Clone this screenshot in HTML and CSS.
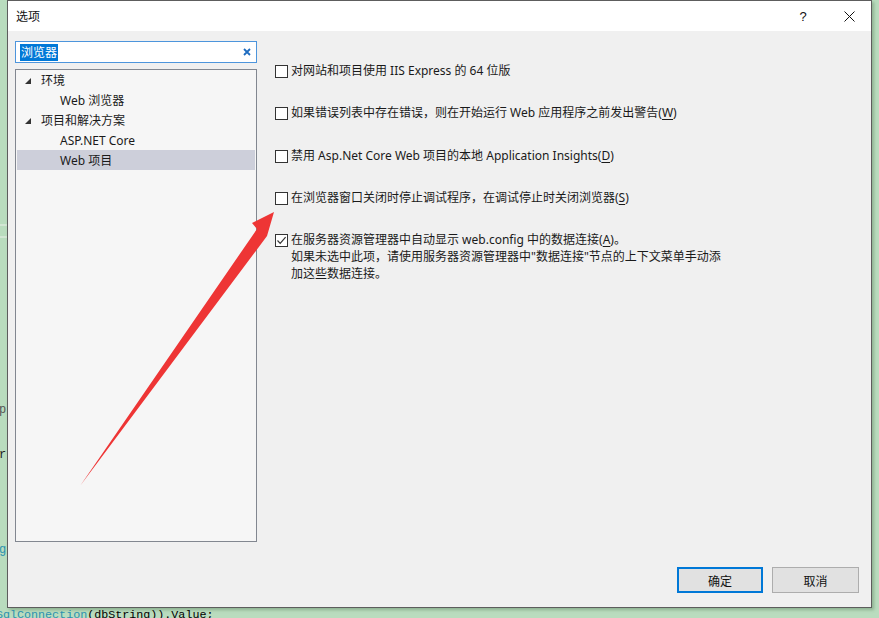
FILE: index.html
```html
<!DOCTYPE html>
<html lang="zh-CN">
<head>
<meta charset="utf-8">
<title>选项</title>
<link rel="stylesheet" href="styles.css">
</head>
<body>
<div class="screen">
  <div class="top-row">
    <div class="editor-left">
      <div class="hl-band"></div>
      <div class="frag frag-p">p</div>
      <div class="frag frag-r">r</div>
      <div class="frag frag-g">g</div>
    </div>
    <div class="dialog">
      <div class="titlebar">
        <span class="title">选项</span>
        <span class="spacer"></span>
        <span class="tb-btn help">?</span>
        <span class="tb-btn close">
          <svg width="11" height="11" viewBox="0 0 11 11"><path d="M0.5 0.5 L10.5 10.5 M10.5 0.5 L0.5 10.5" stroke="#111" stroke-width="1" fill="none"/></svg>
        </span>
      </div>
      <div class="content">
        <div class="left-col">
          <div class="search">
            <span class="search-text">浏览器</span>
            <span class="search-clear">
              <svg width="8" height="8" viewBox="0 0 8 8"><path d="M1 1 L7 7 M7 1 L1 7" stroke="#1e6cc0" stroke-width="1.8" fill="none"/></svg>
            </span>
          </div>
          <div class="tree">
            <div class="node parent"><span class="tri"></span><span>环境</span></div>
            <div class="node child">Web 浏览器</div>
            <div class="node parent"><span class="tri"></span><span>项目和解决方案</span></div>
            <div class="node child">ASP.NET Core</div>
            <div class="node child selected">Web 项目</div>
          </div>
        </div>
        <div class="right-col">
          <div class="opt"><span class="box"></span><span class="label">对网站和项目使用 IIS Express 的 64 位版</span></div>
          <div class="opt"><span class="box"></span><span class="label">如果错误列表中存在错误，则在开始运行 Web 应用程序之前发出警告(<u>W</u>)</span></div>
          <div class="opt"><span class="box"></span><span class="label">禁用 Asp.Net Core Web 项目的本地 Application Insights(<u>D</u>)</span></div>
          <div class="opt"><span class="box"></span><span class="label">在浏览器窗口关闭时停止调试程序，在调试停止时关闭浏览器(<u>S</u>)</span></div>
          <div class="opt"><span class="box checked"><svg width="11" height="11" viewBox="0 0 11 11"><path d="M1.5 5.5 L4.2 8.3 L9.6 2.2" stroke="#333" stroke-width="1.2" fill="none"/></svg></span><span class="label">在服务器资源管理器中自动显示 web.config 中的数据连接(<u>A</u>)。<br>如果未选中此项，请使用服务器资源管理器中"数据连接"节点的上下文菜单手动添<br>加这些数据连接。</span></div>
        </div>
        <div class="footer">
          <button class="btn primary">确定</button>
          <button class="btn">取消</button>
        </div>
      </div>
    </div>
  </div>
  <div class="code-line"><span class="type">SqlConnection</span>(dbString)).Value;</div>
</div>
<svg class="arrow" width="879" height="618" viewBox="0 0 879 618">
  <polygon points="80,486 257,229 252,223 274,212 267,236" fill="#ee3535"/>
</svg>
</body>
</html>
```
FILE: styles.css
```css
* { box-sizing: border-box; }
html, body {
  margin: 0;
  padding: 0;
  width: 879px;
  height: 618px;
  overflow: hidden;
  background: #b9dcbe;
  font-family: "Noto Sans", "Noto Sans CJK SC", sans-serif;
  font-size: 12px;
  color: #1a1a1a;
}
.screen {
  display: flex;
  flex-direction: column;
  width: 879px;
  height: 618px;
}
.top-row {
  display: flex;
  height: 608px;
}
.editor-left {
  width: 7px;
  flex: none;
  overflow: hidden;
  font-family: "Liberation Mono", monospace;
  font-size: 12px;
  line-height: 14px;
  display: flex;
  flex-direction: column;
}
.hl-band {
  margin-top: 224px;
  height: 14px;
  border-top: 2px solid #d2e6d4;
  border-bottom: 2px solid #d2e6d4;
}
.frag { margin-left: -1px; height: 14px; }
.frag-p { margin-top: 165px; color: #555; }
.frag-r { margin-top: 31px; color: #222; }
.frag-g { margin-top: 81px; color: #2b91af; }
.dialog {
  width: 865px;
  height: 608px;
  border: 1px solid #5d5d5d;
  background: #f0f0f0;
  display: flex;
  flex-direction: column;
  box-shadow: 2px 2px 3px rgba(60, 100, 60, 0.35);
}
.titlebar {
  height: 30px;
  background: #ffffff;
  display: flex;
  align-items: center;
  padding: 0 7px 0 8px;
  flex: none;
}
.title { font-size: 12px; color: #111; }
.spacer { flex: 1; }
.tb-btn {
  width: 30px;
  height: 30px;
  display: flex;
  align-items: center;
  justify-content: center;
  font-family: "Liberation Sans", sans-serif;
  font-size: 13px;
  color: #111;
}
.help { margin-right: 16px; }
.content {
  flex: 1;
  display: grid;
  grid-template-columns: 242px 1fr;
  grid-template-rows: 1fr auto;
  column-gap: 18px;
  row-gap: 24px;
  padding: 10px 12px 14px 7px;
}
.left-col {
  display: flex;
  flex-direction: column;
  gap: 6px;
}
.search {
  height: 22px;
  border: 1px solid #4d95dc;
  background: #fff;
  display: flex;
  align-items: center;
  padding: 0 5px 0 4px;
}
.search-text {
  background: #0078d7;
  color: #fff;
  line-height: 17px;
  padding: 0 1px;
}
.search-clear { margin-left: auto; display: flex; }
.tree {
  height: 473px;
  border: 1px solid #828790;
  background: #f6f6f6;
  padding: 0 1px;
}
.node {
  height: 20px;
  line-height: 20px;
  display: flex;
  align-items: center;
  padding-top: 1px;
  color: #1a1a1a;
}
.parent { padding-left: 8px; }
.child { padding-left: 43px; }
.selected { background: #cdcfda; }
.tri {
  width: 0;
  height: 0;
  border-left: 6px solid transparent;
  border-bottom: 6px solid #333;
  margin-right: 10px;
}
.right-col {
  padding-top: 21px;
  display: flex;
  flex-direction: column;
  gap: 25.3px;
}
.opt {
  display: flex;
  align-items: flex-start;
  line-height: 17px;
}
.box {
  width: 13px;
  height: 13px;
  flex: none;
  border: 1px solid #333;
  background: #fff;
  margin-top: 3px;
  margin-right: 3px;
  display: flex;
  align-items: center;
  justify-content: center;
}
.label { color: #1a1a1a; }
.label u { text-underline-offset: 2px; }
.footer {
  grid-column: 1 / -1;
  display: flex;
  justify-content: flex-end;
  gap: 9px;
}
.btn {
  height: 26px;
  width: 87px;
  border: 1px solid #adadad;
  background: #e1e1e1;
  font-family: "Noto Sans CJK SC", sans-serif;
  font-size: 12px;
  color: #111;
  padding: 0;
}
.btn.primary {
  width: 86px;
  border: 2px solid #0078d7;
}
.code-line {
  height: 10px;
  margin-left: -4px;
  font-family: "Liberation Mono", monospace;
  font-size: 11.7px;
  line-height: 15px;
  color: #000;
  white-space: nowrap;
  overflow: visible;
}
.type { color: #2b91af; }
.arrow {
  position: absolute;
  left: 0;
  top: 0;
  pointer-events: none;
}
```
